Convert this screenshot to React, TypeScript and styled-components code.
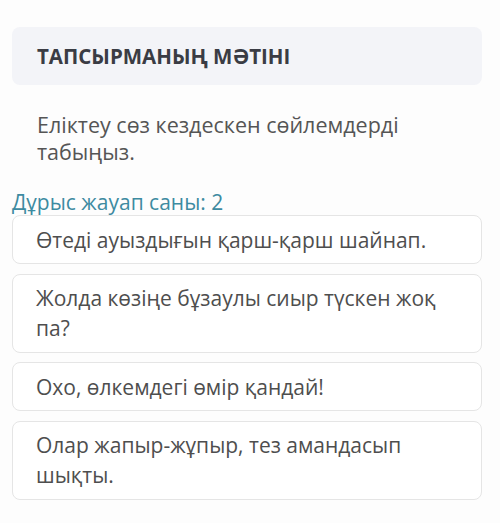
import React from "react";
import styled, { createGlobalStyle } from "styled-components";

const GlobalStyle = createGlobalStyle`
  html, body {
    margin: 0;
    padding: 0;
    background: #fdfdfd;
  }
  body {
    font-family: "Open Sans", "Noto Sans", sans-serif;
  }
`;

/* ─── Layout ─── */

const Page = styled.div`
  width: 500px;
  padding: 27px 18px 0 12px;
  box-sizing: border-box;
`;

const TaskHeader = styled.div`
  background: #f3f4f8;
  border-radius: 8px;
  height: 58px;
  display: flex;
  align-items: center;
  padding: 0 25px;
  h2 {
    margin: 0;
    font-size: 20.5px;
    font-weight: 700;
    color: #3a3c44;
  }
`;

const TaskText = styled.p`
  margin: 26px 0 0;
  padding: 0 25px;
  font-size: 21.5px;
  line-height: 27px;
  color: #555555;
`;

const AnswerCount = styled.div`
  margin-top: 24px;
  font-size: 21px;
  line-height: 26px;
  color: #3d8ba1;
`;

const OptionList = styled.div`
  display: flex;
  flex-direction: column;
  gap: 9.5px;
`;

const Option = styled.div`
  background: #fff;
  border: 1.5px solid #e5e5e5;
  border-radius: 8px;
  padding: 8.5px 23px;
  font-size: 21px;
  line-height: 30px;
  color: #4e4e4e;
`;

const options = [
  "Өтеді ауыздығын қарш-қарш шайнап.",
  "Жолда көзіңе бұзаулы сиыр түскен жоқ па?",
  "Охо, өлкемдегі өмір қандай!",
  "Олар жапыр-жұпыр, тез амандасып шықты.",
];

export default function App() {
  return (
    <>
      <GlobalStyle />
      <Page>
        <TaskHeader>
          <h2>ТАПСЫРМАНЫҢ МӘТІНІ</h2>
        </TaskHeader>
        <TaskText>Еліктеу сөз кездескен сөйлемдерді табыңыз.</TaskText>
        <AnswerCount>Дұрыс жауап саны: 2</AnswerCount>
        <OptionList>
          {options.map((o) => (
            <Option key={o}>{o}</Option>
          ))}
        </OptionList>
      </Page>
    </>
  );
}
